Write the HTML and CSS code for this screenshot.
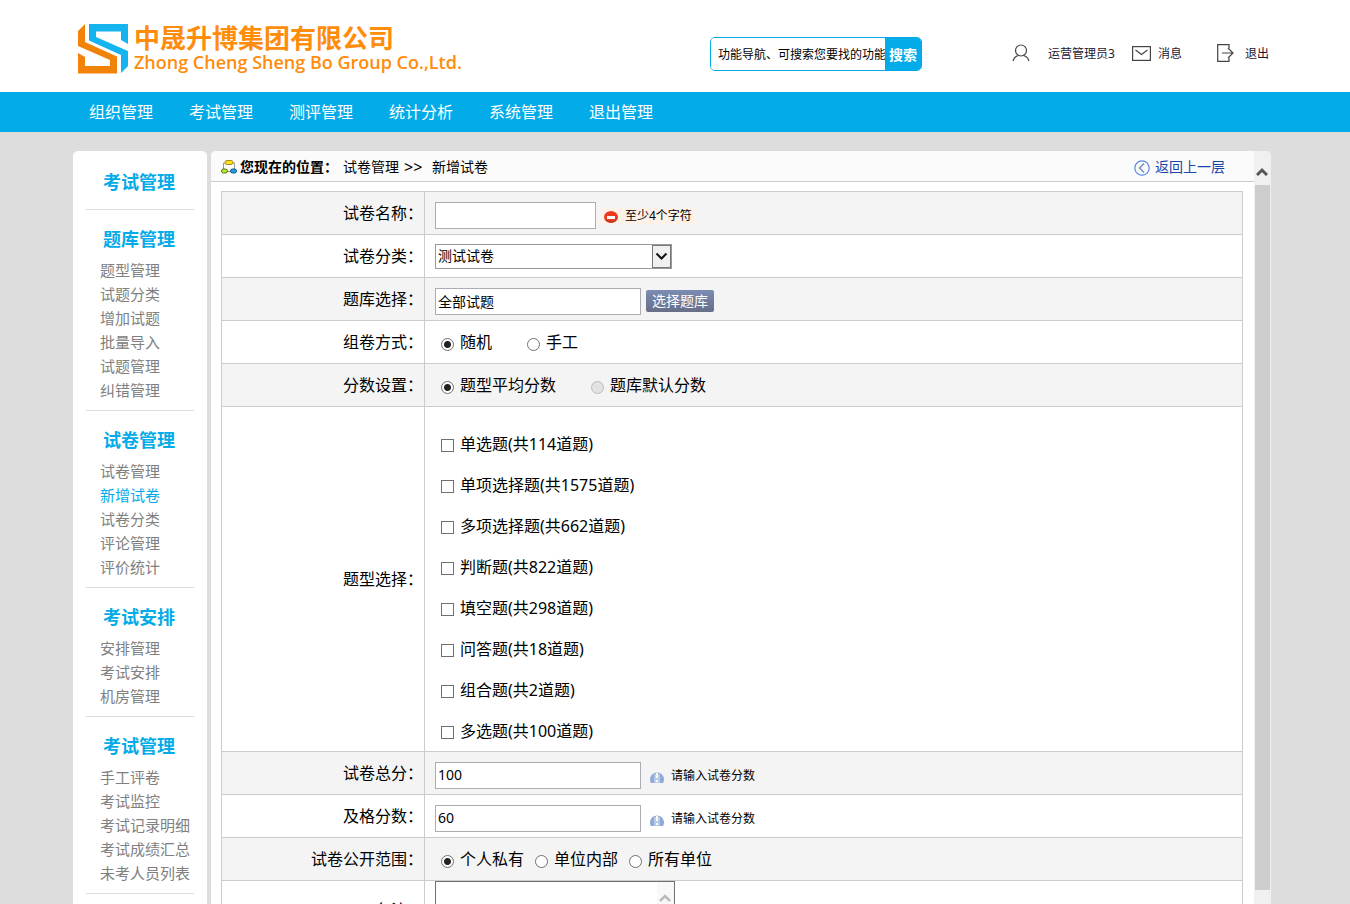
FILE: index.html
```html
<!DOCTYPE html>
<html lang="zh-CN">
<head>
<meta charset="utf-8">
<title>新增试卷</title>
<link rel="stylesheet" href="styles.css">
</head>
<body>
<header class="header">
  <a class="brand" href="#">
    <svg class="brand-mark" width="50" height="50" viewBox="0 0 50 50" aria-hidden="true">
      <path fill="#15b4ee" d="M43 49V31L11 16.500V0H50V20L43 16V7.500H18V13L50 27V42Z"/>
      <path fill="#f08308" d="M7 0V18L39 32.500V49.500H0V29L7 33V42H32V36L0 22V7Z"/>
    </svg>
    <span class="brand-text">
      <span class="brand-cn">中晟升博集团有限公司</span>
      <span class="brand-en">Zhong Cheng Sheng Bo Group Co.,Ltd.</span>
    </span>
  </a>
  <form class="search">
    <input class="search-input" type="text" aria-label="功能搜索" value="功能导航、可搜索您要找的功能">
    <button class="search-button" type="button">搜索</button>
  </form>
  <div class="user">
    <a class="user-link user-name" href="#">
      <svg width="18" height="18" viewBox="0 0 18 18" fill="none" stroke="#444" stroke-width="1.2" aria-hidden="true"><circle cx="9" cy="6.5" r="5.5"/><path d="M1 17C2 13.500 4.500 12 6.500 11.500M17 17C16 13.500 13.500 12 11.500 11.500"/></svg>
      <span>运营管理员3</span>
    </a>
    <a class="user-link user-mail" href="#">
      <svg width="19" height="15" viewBox="0 0 19 15" fill="none" stroke="#444" stroke-width="1.2" aria-hidden="true"><rect x=".6" y=".6" width="17.800" height="13.800"/><path d="M3.500 4L9.500 8.500L15.500 4"/></svg>
      <span>消息</span>
    </a>
    <a class="user-link user-exit" href="#">
      <svg width="17" height="18" viewBox="0 0 17 18" fill="none" stroke="#444" stroke-width="1.2" aria-hidden="true"><path d="M12 4V.7H.7V17.300H12V14M5 9H16M11 4L16 9L11 14"/></svg>
      <span>退出</span>
    </a>
  </div>
</header>
<nav class="nav">
  <a href="#">组织管理</a><a href="#">考试管理</a><a href="#">测评管理</a><a href="#">统计分析</a><a href="#">系统管理</a><a href="#">退出管理</a>
</nav>
<div class="content">
  <aside class="sidebar">
    <section class="menu menu-top"><h2>考试管理</h2></section>
    <section class="menu">
      <h2>题库管理</h2>
      <ul><li><a href="#">题型管理</a></li><li><a href="#">试题分类</a></li><li><a href="#">增加试题</a></li><li><a href="#">批量导入</a></li><li><a href="#">试题管理</a></li><li><a href="#">纠错管理</a></li></ul>
    </section>
    <section class="menu">
      <h2>试卷管理</h2>
      <ul><li><a href="#">试卷管理</a></li><li><a class="current" href="#">新增试卷</a></li><li><a href="#">试卷分类</a></li><li><a href="#">评论管理</a></li><li><a href="#">评价统计</a></li></ul>
    </section>
    <section class="menu">
      <h2>考试安排</h2>
      <ul><li><a href="#">安排管理</a></li><li><a href="#">考试安排</a></li><li><a href="#">机房管理</a></li></ul>
    </section>
    <section class="menu">
      <h2>考试管理</h2>
      <ul><li><a href="#">手工评卷</a></li><li><a href="#">考试监控</a></li><li><a href="#">考试记录明细</a></li><li><a href="#">考试成绩汇总</a></li><li><a href="#">未考人员列表</a></li></ul>
    </section>
  </aside>
  <main class="panel">
    <div class="panel-body">
      <div class="crumbs">
        <svg width="16" height="14" viewBox="0 0 16 14" aria-hidden="true"><path d="M2.500 9V3H13.500V9M6 11.500H10" fill="none" stroke="#999"/><rect x="4" y=".5" width="8" height="4" rx="2" fill="#fbe11c" stroke="#a8891c"/><rect x=".5" y="9" width="6" height="4" rx="2" fill="#bdeb20" stroke="#54761b"/><rect x="9.500" y="9" width="6" height="4" rx="2" fill="#1ca0e3" stroke="#125688"/></svg>
        <strong>您现在的位置：</strong>
        <a href="#">试卷管理</a><span class="sep">&gt;&gt;</span><span>新增试卷</span>
        <a class="back" href="#">
          <svg width="16" height="16" viewBox="0 0 16 16" fill="none" stroke="#5a86dc" stroke-width="1.200" aria-hidden="true"><circle cx="8" cy="8" r="7.200"/><path d="M10 3.500L5.500 8L10 12.500"/></svg>
          <span>返回上一层</span>
        </a>
      </div>
      <form class="form">
        <table class="fields">
          <tr>
            <th><label for="name">试卷名称：</label></th>
            <td><div class="line"><input class="text short" id="name" type="text">
              <span class="hint error"><svg width="14" height="12" viewBox="0 0 14 12" aria-hidden="true"><ellipse cx="7" cy="6" rx="7" ry="6" fill="#ee3a1c"/><path d="M1 8A6.500 5 0 0 0 13 8" fill="none" stroke="#a53427"/><rect x="3" y="5" width="8" height="3" fill="#fff"/></svg>至少4个字符</span></div></td>
          </tr>
          <tr>
            <th><label for="category">试卷分类：</label></th>
            <td><div class="line"><span class="select-wrap"><select id="category"><option>测试试卷</option></select>
              <svg class="select-arrow" width="19" height="23" viewBox="0 0 19 23" aria-hidden="true"><rect x=".5" y=".5" width="18" height="22" fill="#f0f0f0" stroke="#777"/><path d="M4.500 8.500L9.500 13.500L14.500 8.500" fill="none" stroke="#111" stroke-width="2"/></svg></span></div></td>
          </tr>
          <tr>
            <th><label for="bank">题库选择：</label></th>
            <td><div class="line"><input class="text" id="bank" type="text" value="全部试题"><button class="pick" type="button">选择题库</button></div></td>
          </tr>
          <tr>
            <th>组卷方式：</th>
            <td><div class="line choices wide"><label><input type="radio" name="mode" checked>随机</label><label><input type="radio" name="mode">手工</label></div></td>
          </tr>
          <tr>
            <th>分数设置：</th>
            <td><div class="line choices wide"><label><input type="radio" name="score" checked>题型平均分数</label><label><input type="radio" name="score" disabled>题库默认分数</label></div></td>
          </tr>
          <tr>
            <th>题型选择：</th>
            <td><div class="types choices">
              <label><input type="checkbox">单选题(共114道题)</label>
              <label><input type="checkbox">单项选择题(共1575道题)</label>
              <label><input type="checkbox">多项选择题(共662道题)</label>
              <label><input type="checkbox">判断题(共822道题)</label>
              <label><input type="checkbox">填空题(共298道题)</label>
              <label><input type="checkbox">问答题(共18道题)</label>
              <label><input type="checkbox">组合题(共2道题)</label>
              <label><input type="checkbox">多选题(共100道题)</label>
            </div></td>
          </tr>
          <tr>
            <th><label for="total">试卷总分：</label></th>
            <td><div class="line"><input class="text" id="total" type="text" value="100">
              <span class="hint"><svg width="14" height="12" viewBox="0 0 14 12" aria-hidden="true"><path d="M1 12A7 7 0 1 1 13 12Z" fill="#8fa9d8"/><path d="M4 3H10V12H4Z" fill="#b9cbea"/><path d="M6 2H8V7H6ZM6 9H8V11H6Z" fill="#fffbe8"/></svg>请输入试卷分数</span></div></td>
          </tr>
          <tr>
            <th><label for="pass">及格分数：</label></th>
            <td><div class="line"><input class="text" id="pass" type="text" value="60">
              <span class="hint"><svg width="14" height="12" viewBox="0 0 14 12" aria-hidden="true"><path d="M1 12A7 7 0 1 1 13 12Z" fill="#8fa9d8"/><path d="M4 3H10V12H4Z" fill="#b9cbea"/><path d="M6 2H8V7H6ZM6 9H8V11H6Z" fill="#fffbe8"/></svg>请输入试卷分数</span></div></td>
          </tr>
          <tr>
            <th>试卷公开范围：</th>
            <td><div class="line choices"><label><input type="radio" name="scope" checked>个人私有</label><label><input type="radio" name="scope">单位内部</label><label><input type="radio" name="scope">所有单位</label></div></td>
          </tr>
          <tr>
            <th><label for="remark">备注：</label></th>
            <td><div class="area-wrap"><textarea id="remark"></textarea><span class="area-scroll"><svg width="12" height="8" viewBox="0 0 12 8" fill="none" stroke="#bbb" stroke-width="2.500" aria-hidden="true"><path d="M1 7L6 2L11 7"/></svg></span></div></td>
          </tr>
        </table>
      </form>
    </div>
    <div class="scrollbar">
      <button class="scroll-up" type="button" aria-label="向上滚动"><svg width="12" height="9" viewBox="0 0 12 9" fill="none" stroke="#555" stroke-width="3" aria-hidden="true"><path d="M1 8L6 3L11 8"/></svg></button>
      <div class="thumb"></div>
    </div>
  </main>
</div>
</body>
</html>
```

FILE: styles.css
```css
* { box-sizing: border-box; }
body {
  margin: 0;
  height: 100vh;
  display: flex;
  flex-direction: column;
  overflow: hidden;
  background: #ddd;
  color: #000;
  font: 14px/20px "Noto Sans", "Noto Sans CJK SC", sans-serif;
}
a { color: inherit; text-decoration: none; }
svg { display: block; flex: none; }
input, button, select, textarea { font-family: inherit; margin: 0; }

.header {
  flex: none;
  display: flex;
  align-items: center;
  height: 92px;
  padding: 0 81px 0 78px;
  background: #fff;
}
.brand { display: flex; align-items: center; gap: 6px; flex: 1; padding-top: 5px; color: #ff8c0a; }
.brand-text { display: flex; flex-direction: column; white-space: nowrap; }
.brand-cn { font-family: "Noto Sans CJK SC", sans-serif; font-size: 26px; font-weight: 700; line-height: 26px; }
.brand-en { font: 600 18px/24px "Open Sans", sans-serif; }
.search {
  display: flex;
  width: 212px;
  height: 34px;
  margin: 37px 90px 0 0;
  align-self: flex-start;
  border: 1px solid #04abe9;
  border-radius: 5px;
  overflow: hidden;
}
.search-input { flex: 1; min-width: 0; border: 0; padding: 0 0 0 7px; font-size: 12px; background: #fff; color: #000; }
.search-button { width: 36px; border: 0; padding: 0; background: #04abe9; color: #fff; font-size: 14px; font-weight: 700; }
.user { display: flex; align-items: center; height: 34px; margin-top: 14px; font-size: 12px; color: #1c1730; }
.user-link { display: flex; align-items: center; }
.user-link span { padding-top: 2px; }
.user-name { gap: 18px; margin-right: 17px; }
.user-mail { gap: 7px; margin-right: 35px; }
.user-exit { gap: 11px; }

.nav {
  flex: none;
  display: flex;
  align-items: center;
  gap: 36px;
  height: 40px;
  padding: 0 89px;
  background: #04abe9;
  color: #fff;
  font-size: 16px;
}

.content { flex: 1; min-height: 0; display: flex; gap: 4px; padding: 19px 79px 0 73px; }
.sidebar { flex: none; width: 134px; padding: 0 13px; background: #fff; border-radius: 5px 5px 0 0; overflow: hidden; }
.menu { padding: 15px 0 8px; border-bottom: 1px solid #ddd; }
.menu h2 { margin: 0 0 5px; padding-left: 17px; font-size: 18px; line-height: 28px; color: #04abe9; }
.menu ul { list-style: none; margin: 0; padding: 0 0 0 14px; font-size: 15px; line-height: 24px; color: #808080; white-space: nowrap; }
.menu .current { color: #04abe9; }
.menu-top { padding-top: 17px; }

.panel { flex: 1; min-width: 0; display: flex; background: #fff; border-radius: 5px 5px 0 0; overflow: hidden; }
.panel-body { flex: 1; min-width: 0; }
.crumbs { display: flex; align-items: center; height: 31px; padding: 2px 29px 0 10px; background: #fbfbfb; border-bottom: 1px solid #ccc; }
.crumbs strong { margin: 0 5px 0 3px; }
.sep { width: 33px; padding-left: 5px; font-size: 16px; }
.back { display: flex; align-items: center; gap: 5px; margin-left: auto; color: #1c45a8; }
.back svg { margin-top: 2px; }

.form { padding: 9px 11px 0 10px; }
.fields { width: 100%; border-collapse: collapse; font-size: 16px; line-height: 24px; }
.fields th, .fields td { border: 1px solid #ccc; padding: 0; }
.fields th { width: 203px; padding-right: 1px; text-align: right; font-weight: 400; }
.fields tr:nth-child(odd) { background: #f4f4f4; }
.fields td { padding-left: 10px; }
.line { display: flex; align-items: center; height: 42px; }
.text { width: 206px; height: 27px; margin-top: 5px; padding: 0 2px 2px; border: 1px solid #abadb3; background: #fff; font-size: 14px; color: #000; }
.short { width: 161px; }
.hint { display: flex; align-items: center; gap: 7px; margin: 5px 0 0 9px; font-size: 12px; line-height: 16px; }
.hint svg { margin-top: 2px; }
.error { margin-left: 4px; padding: 0 4px; background: #fef1e8; }
.select-wrap { position: relative; width: 237px; height: 25px; }
.select-wrap select { display: block; appearance: none; width: 100%; height: 100%; padding: 0 2px 1px; border: 1px solid #999; border-radius: 0; background: #fff; font-size: 14px; color: #000; }
.select-arrow { position: absolute; top: 1px; right: 1px; pointer-events: none; }
.pick { width: 68px; height: 22px; margin: 3px 0 0 5px; padding: 0; border: 0; border-radius: 2px; background: linear-gradient(#7b8cb3, #676e88); color: #fff; font-size: 14px; line-height: 20px; }
.choices { padding-left: 6px; gap: 11px; }
.choices label { display: flex; align-items: center; gap: 6px; }
.wide { gap: 35px; }
.choices input { appearance: none; width: 13px; height: 13px; margin-top: 4px; border: 1px solid #707070; background: #fff; }
.choices input[type="radio"] { border-radius: 50%; }
.choices input[type="radio"]:checked { background: radial-gradient(circle, #222 0 3px, #fff 4px); }
.choices input:disabled { border-color: #bbb; background: #e2e2e2; }
.types { padding-top: 16px; }
.types label { height: 41px; }
.area-wrap { position: relative; width: 240px; height: 58px; }
.area-wrap textarea { display: block; width: 100%; height: 56px; border: 1px solid #707070; resize: none; font-size: 14px; }
.area-scroll { position: absolute; top: 1px; right: 1px; width: 17px; height: 54px; padding: 12px 0 0 2px; background: #f8f8f8; }

.scrollbar { flex: none; width: 17px; display: flex; flex-direction: column; background: #f0f0f0; }
.scroll-up { display: flex; justify-content: center; align-items: center; width: 16px; height: 34px; padding: 6px 0 0; border: 0; background: transparent; }
.thumb { flex: 1; margin: 0 1px 14px; background: #cdcdcd; }
```
